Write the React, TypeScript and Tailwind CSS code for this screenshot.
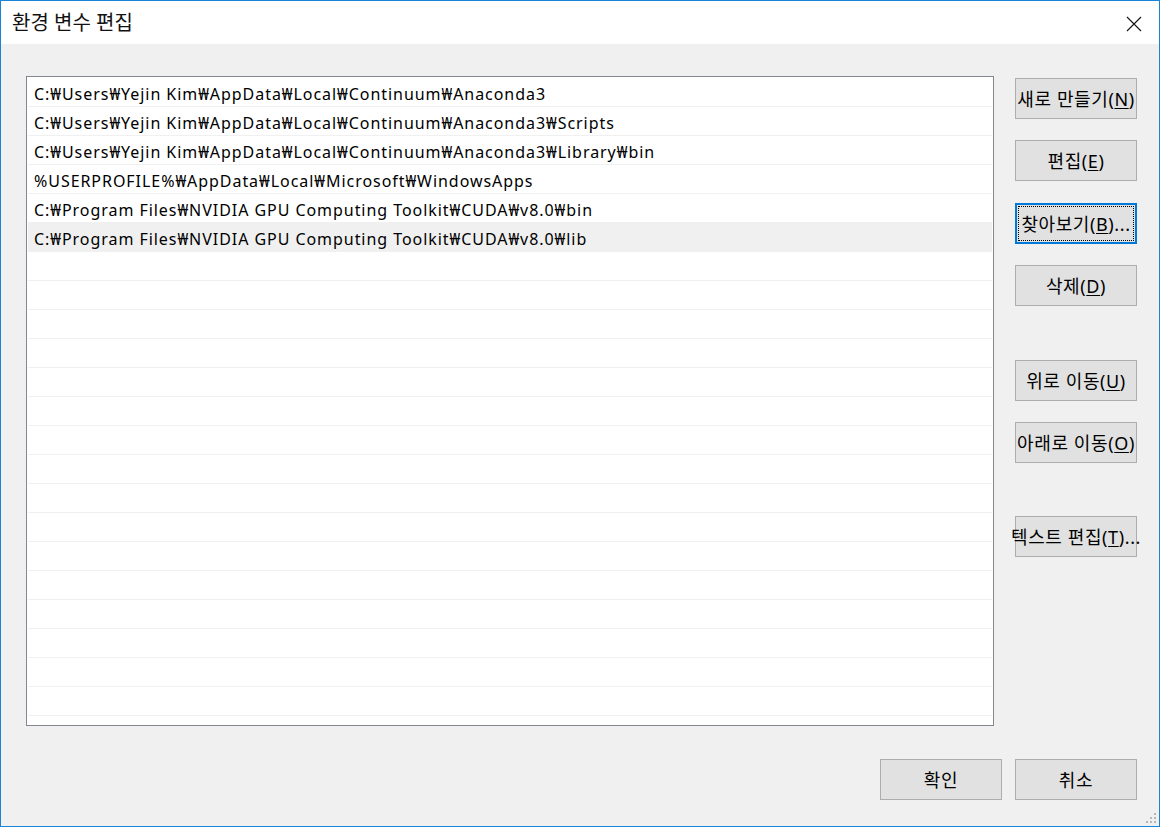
import React from "react";

const paths = [
  "C:₩Users₩Yejin Kim₩AppData₩Local₩Continuum₩Anaconda3",
  "C:₩Users₩Yejin Kim₩AppData₩Local₩Continuum₩Anaconda3₩Scripts",
  "C:₩Users₩Yejin Kim₩AppData₩Local₩Continuum₩Anaconda3₩Library₩bin",
  "%USERPROFILE%₩AppData₩Local₩Microsoft₩WindowsApps",
  "C:₩Program Files₩NVIDIA GPU Computing Toolkit₩CUDA₩v8.0₩bin",
  "C:₩Program Files₩NVIDIA GPU Computing Toolkit₩CUDA₩v8.0₩lib",
];

const FONT = { fontFamily: '"Noto Sans", "Noto Sans CJK KR", sans-serif' };

function Btn({
  label,
  k,
  after = "",
  focused = false,
  className = "",
}: {
  label: string;
  k: string;
  after?: string;
  focused?: boolean;
  className?: string;
}) {
  return (
    <div
      className={
        "w-[122px] h-[41px] shrink-0 flex items-center justify-center bg-[#e1e1e1] text-[18px] leading-none text-black whitespace-nowrap " +
        (focused ? "border-2 border-[#0078d7] p-[1px] " : "border border-[#adadad] ") +
        className
      }
    >
      <div
        className={
          "w-full h-full flex items-center justify-center " +
          (focused ? "border border-dotted border-black" : "")
        }
      >
        <span className="tracking-[0.6px]">
          {label}(<span className="underline underline-offset-2">{k}</span>){after}
        </span>
      </div>
    </div>
  );
}

export default function App() {
  const rows = Array.from({ length: 22 }, (_, i) => paths[i] ?? "");
  return (
    <div
      className="w-[1160px] h-[827px] border border-[#1883d7] bg-[#f0f0f0] flex flex-col relative overflow-hidden"
      style={FONT}
    >
      <div className="h-[43px] shrink-0 bg-white flex items-center justify-between pl-[11px] pr-[17px]">
        <span className="text-[20px] leading-none text-[#111] mt-[1px]">환경 변수 편집</span>
        <svg width="16" height="16" viewBox="0 0 16 16" className="mt-[2px]">
          <path d="M1 1 L15 15 M15 1 L1 15" stroke="#111" strokeWidth="1.1" fill="none" />
        </svg>
      </div>
      <div className="flex-1 flex flex-col pl-[25px] pr-[22px] pt-[32px]">
        <div className="flex gap-[21px]">
          <div className="w-[968px] h-[650px] border border-[#828790] bg-white p-[1px] overflow-hidden">
            {rows.map((r, i) => (
              <div
                key={i}
                className={
                  "h-[29px] border-b border-[#f0f0f0] flex items-center pl-[6px] pt-[4px] text-[16px] leading-none tracking-[0.95px] text-black whitespace-nowrap " +
                  (i === 5 ? "bg-[#f0f0f0]" : "")
                }
              >
                {r}
              </div>
            ))}
          </div>
          <div className="flex flex-col">
            <Btn label="새로 만들기" k="N" className="mt-[2px]" />
            <Btn label="편집" k="E" className="mt-[21px]" />
            <Btn label="찾아보기" k="B" after="..." focused className="mt-[22px]" />
            <Btn label="삭제" k="D" className="mt-[21px]" />
            <Btn label="위로 이동" k="U" className="mt-[54px]" />
            <Btn label="아래로 이동" k="O" className="mt-[21px]" />
            <Btn label="텍스트 편집" k="T" after="..." className="mt-[53px]" />
          </div>
        </div>
        <div className="flex justify-end gap-[13px] mt-[33px]">
          <div className="w-[122px] h-[41px] flex items-center justify-center bg-[#e1e1e1] border border-[#adadad] text-[18px] tracking-[0.6px] leading-none">
            확인
          </div>
          <div className="w-[122px] h-[41px] flex items-center justify-center bg-[#e1e1e1] border border-[#adadad] text-[18px] tracking-[0.6px] leading-none">
            취소
          </div>
        </div>
      </div>
      <svg
        width="12"
        height="12"
        viewBox="0 0 12 12"
        className="absolute right-[2px] bottom-[2px]"
      >
        <rect x="9" y="1" width="2" height="2" fill="#b8b8b8" />
        <rect x="5" y="5" width="2" height="2" fill="#b8b8b8" />
        <rect x="9" y="5" width="2" height="2" fill="#b8b8b8" />
        <rect x="1" y="9" width="2" height="2" fill="#b8b8b8" />
        <rect x="5" y="9" width="2" height="2" fill="#b8b8b8" />
        <rect x="9" y="9" width="2" height="2" fill="#b8b8b8" />
      </svg>
    </div>
  );
}
